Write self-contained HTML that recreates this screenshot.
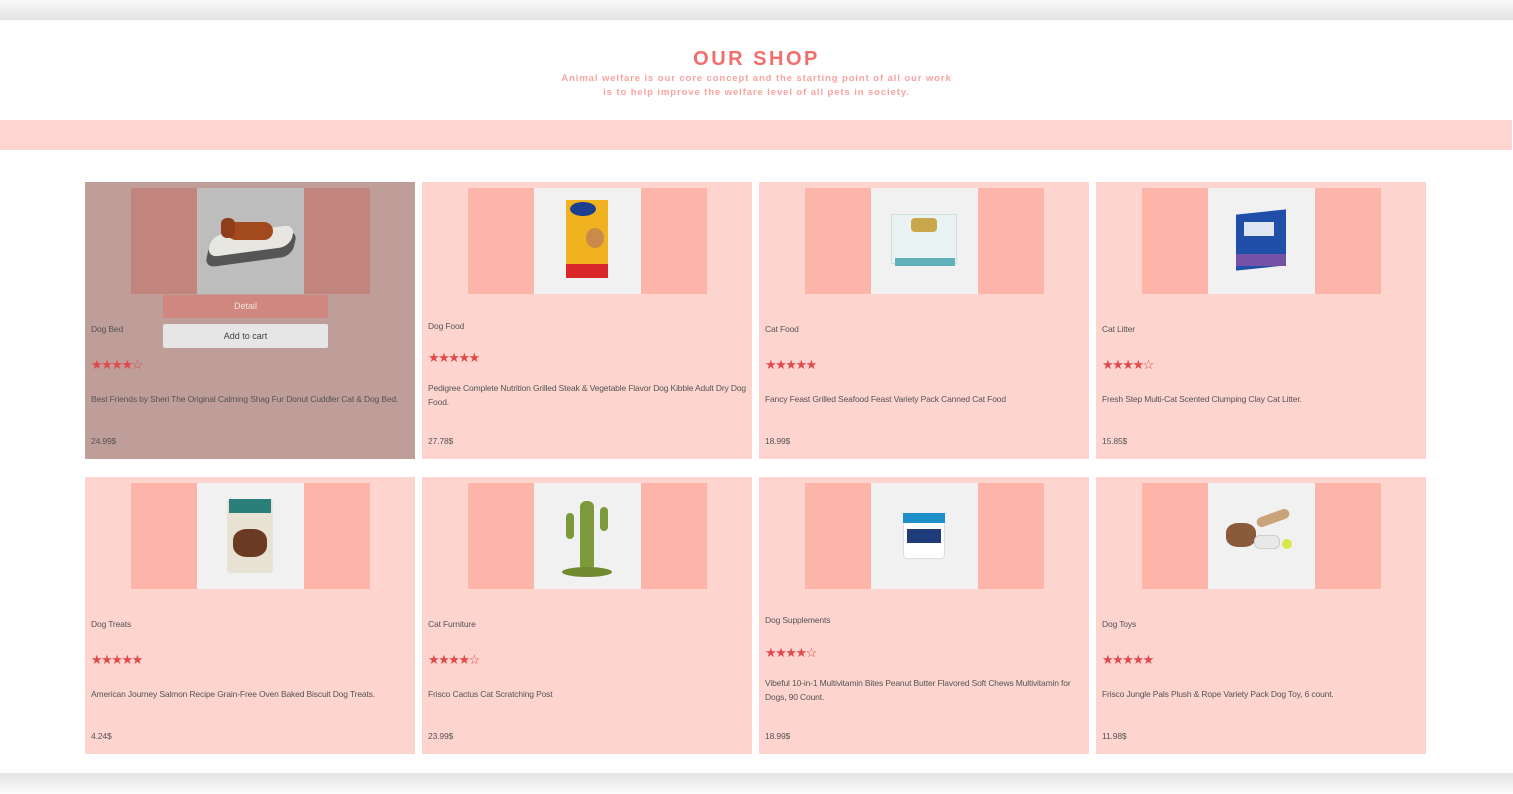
<!DOCTYPE html>
<html><head><meta charset="utf-8"><style>
*{margin:0;padding:0;box-sizing:border-box}
body{width:1513px;height:794px;position:relative;background:#fff;font-family:"Liberation Sans",sans-serif;overflow:hidden}
.top{position:absolute;left:0;top:0;width:1513px;height:20px;background:linear-gradient(#fafafa,#e2e2e2)}
.bot{position:absolute;left:0;top:773px;width:1513px;height:21px;background:linear-gradient(#e4e4e4,#fbfbfb)}
h1{position:absolute;top:48px;left:0;width:1513px;text-align:center;color:#f06f6c;font-size:20px;letter-spacing:2.5px;font-weight:bold}
.sub{position:absolute;top:72px;left:0;width:1513px;text-align:center;color:#f7a3a0;font-size:9.5px;font-weight:bold;letter-spacing:.9px;line-height:13.5px}
.band{position:absolute;left:0;top:120px;width:1512px;height:30px;background:#fed5d0}
.card{position:absolute;width:330px;height:277px;background:#fed4cf}
.card.h{background:#bf9d98}
.img{position:absolute;left:46px;top:6px;width:239px;height:106px;background:#feb5a9}
.card.h .img{background:#c2857d}
.sq{position:absolute;left:66px;top:0;width:107px;height:106px;background:#f1f1f1;overflow:hidden}
.card.h .sq{background:#bdbdbd}
.t{position:absolute;left:6px;font-size:8.5px;color:#555;line-height:13.5px;width:322px;letter-spacing:-.15px}
.st{position:absolute;left:6px;font-size:13px;color:#e04a4a;letter-spacing:-1.5px;line-height:13px}
.det{position:absolute;left:78px;top:113px;width:165px;height:23px;background:#cf877f;color:#f4e0dd;font-size:9px;text-align:center;line-height:23px}
.add{position:absolute;left:78px;top:142px;width:165px;height:24px;background:#e6e6e6;color:#444;font-size:9px;text-align:center;line-height:24px;border-radius:2px}
</style></head><body>
<div class="top"></div>
<h1>OUR SHOP</h1>
<div class="sub">Animal welfare is our core concept and the starting point of all our work<br>is to help improve the welfare level of all pets in society.</div>
<div class="band"></div>

<div class="card h" style="left:85px;top:182px">
 <div class="img"><div class="sq">
  <div style="position:absolute;left:12px;top:48px;width:84px;height:26px;background:#555;border-radius:10px;transform:skewX(-20deg) rotate(-8deg)"></div>
  <div style="position:absolute;left:14px;top:42px;width:80px;height:22px;background:#e8e6e0;border-radius:10px;transform:skewX(-20deg) rotate(-8deg)"></div>
  <div style="position:absolute;left:30px;top:34px;width:46px;height:18px;background:#a24a1e;border-radius:10px"></div>
  <div style="position:absolute;left:24px;top:30px;width:14px;height:20px;background:#8e3e18;border-radius:6px"></div>
 </div></div>
 <div class="det">Detail</div><div class="add">Add to cart</div>
 <div class="t" style="top:141px">Dog Bed</div>
 <div class="st" style="top:176px">★★★★☆</div>
 <div class="t" style="top:211px">Best Friends by Sheri The Original Calming Shag Fur Donut Cuddler Cat &amp; Dog Bed.</div>
 <div class="t" style="top:253px">24.99$</div>
</div>

<div class="card" style="left:422px;top:182px">
 <div class="img"><div class="sq">
  <div style="position:absolute;left:32px;top:12px;width:42px;height:78px;background:#f0b21e"></div>
  <div style="position:absolute;left:32px;top:76px;width:42px;height:14px;background:#d8262b"></div>
  <div style="position:absolute;left:36px;top:14px;width:26px;height:14px;background:#1d3f8f;border-radius:50%"></div>
  <div style="position:absolute;left:52px;top:40px;width:18px;height:20px;background:#c98a4a;border-radius:50%"></div>
 </div></div>
 <div class="t" style="top:138px">Dog Food</div>
 <div class="st" style="top:169px">★★★★★</div>
 <div class="t" style="top:200px">Pedigree Complete Nutrition Grilled Steak &amp; Vegetable Flavor Dog Kibble Adult Dry Dog Food.</div>
 <div class="t" style="top:253px">27.78$</div>
</div>

<div class="card" style="left:759px;top:182px">
 <div class="img"><div class="sq">
  <div style="position:absolute;left:20px;top:26px;width:66px;height:50px;background:#e9f3f4;border:1px solid #cfdede"></div>
  <div style="position:absolute;left:24px;top:70px;width:60px;height:8px;background:#5fb0b8"></div>
  <div style="position:absolute;left:40px;top:30px;width:26px;height:14px;background:#c8a84a;border-radius:4px"></div>
 </div></div>
 <div class="t" style="top:141px">Cat Food</div>
 <div class="st" style="top:176px">★★★★★</div>
 <div class="t" style="top:211px">Fancy Feast Grilled Seafood Feast Variety Pack Canned Cat Food</div>
 <div class="t" style="top:253px">18.99$</div>
</div>

<div class="card" style="left:1096px;top:182px">
 <div class="img"><div class="sq">
  <div style="position:absolute;left:28px;top:24px;width:50px;height:56px;background:#1f4fa8;transform:skewY(-6deg)"></div>
  <div style="position:absolute;left:36px;top:34px;width:30px;height:14px;background:#fff;opacity:.85"></div>
  <div style="position:absolute;left:28px;top:66px;width:50px;height:12px;background:#7552a8"></div>
 </div></div>
 <div class="t" style="top:141px">Cat Litter</div>
 <div class="st" style="top:176px">★★★★☆</div>
 <div class="t" style="top:211px">Fresh Step Multi-Cat Scented Clumping Clay Cat Litter.</div>
 <div class="t" style="top:253px">15.85$</div>
</div>

<div class="card" style="left:85px;top:477px">
 <div class="img"><div class="sq">
  <div style="position:absolute;left:30px;top:16px;width:46px;height:74px;background:#e8e2d4;border-radius:4px"></div>
  <div style="position:absolute;left:32px;top:16px;width:42px;height:14px;background:#2a7f7a"></div>
  <div style="position:absolute;left:36px;top:46px;width:34px;height:28px;background:#6a3a22;border-radius:40%"></div>
 </div></div>
 <div class="t" style="top:141px">Dog Treats</div>
 <div class="st" style="top:176px">★★★★★</div>
 <div class="t" style="top:211px">American Journey Salmon Recipe Grain-Free Oven Baked Biscuit Dog Treats.</div>
 <div class="t" style="top:253px">4.24$</div>
</div>

<div class="card" style="left:422px;top:477px">
 <div class="img"><div class="sq">
  <div style="position:absolute;left:46px;top:18px;width:14px;height:70px;background:#7d9a3a;border-radius:6px"></div>
  <div style="position:absolute;left:32px;top:30px;width:8px;height:26px;background:#7d9a3a;border-radius:4px"></div>
  <div style="position:absolute;left:66px;top:24px;width:8px;height:24px;background:#7d9a3a;border-radius:4px"></div>
  <div style="position:absolute;left:28px;top:84px;width:50px;height:10px;background:#6f8a30;border-radius:50%"></div>
 </div></div>
 <div class="t" style="top:141px">Cat Furniture</div>
 <div class="st" style="top:176px">★★★★☆</div>
 <div class="t" style="top:211px">Frisco Cactus Cat Scratching Post</div>
 <div class="t" style="top:253px">23.99$</div>
</div>

<div class="card" style="left:759px;top:477px">
 <div class="img"><div class="sq">
  <div style="position:absolute;left:32px;top:32px;width:42px;height:44px;background:#fff;border:1px solid #ddd;border-radius:4px"></div>
  <div style="position:absolute;left:32px;top:30px;width:42px;height:10px;background:#1e8fc8"></div>
  <div style="position:absolute;left:36px;top:46px;width:34px;height:14px;background:#1c3b78"></div>
 </div></div>
 <div class="t" style="top:137px">Dog Supplements</div>
 <div class="st" style="top:169px">★★★★☆</div>
 <div class="t" style="top:200px">Vibeful 10-in-1 Multivitamin Bites Peanut Butter Flavored Soft Chews Multivitamin for Dogs, 90 Count.</div>
 <div class="t" style="top:253px">18.99$</div>
</div>

<div class="card" style="left:1096px;top:477px">
 <div class="img"><div class="sq">
  <div style="position:absolute;left:18px;top:40px;width:30px;height:24px;background:#8a5a3a;border-radius:40%"></div>
  <div style="position:absolute;left:48px;top:30px;width:34px;height:10px;background:#c9a37a;border-radius:5px;transform:rotate(-20deg)"></div>
  <div style="position:absolute;left:46px;top:52px;width:26px;height:14px;background:#e8e8e8;border:1px solid #ccc;border-radius:6px"></div>
  <div style="position:absolute;left:74px;top:56px;width:10px;height:10px;background:#d9e84a;border-radius:50%"></div>
 </div></div>
 <div class="t" style="top:141px">Dog Toys</div>
 <div class="st" style="top:176px">★★★★★</div>
 <div class="t" style="top:211px">Frisco Jungle Pals Plush &amp; Rope Variety Pack Dog Toy, 6 count.</div>
 <div class="t" style="top:253px">11.98$</div>
</div>

<div class="bot"></div>
</body></html>
